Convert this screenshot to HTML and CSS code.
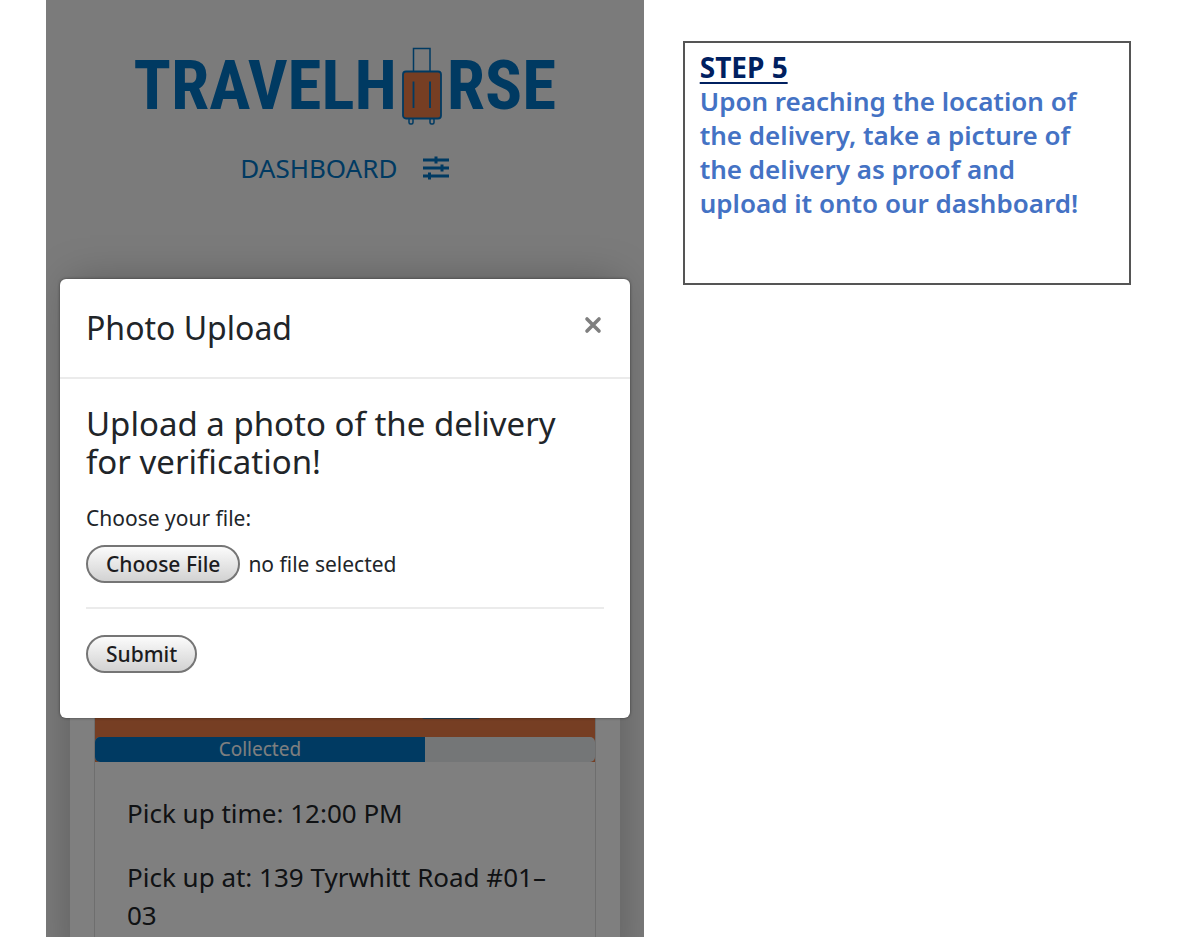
FILE: index.html
```html
<!DOCTYPE html>
<html lang="en">
<head>
<meta charset="utf-8">
<meta name="viewport" content="width=device-width, initial-scale=1">
<title>Travelhorse – Photo Upload</title>
<link rel="stylesheet" href="styles.css">
</head>
<body>
<main class="page">
  <section class="phone">
    <header class="brand">
      <h1 class="logo">
        <span>TRAVELH</span>
        <svg class="suitcase" viewBox="0 0 40 78" width="40" height="78" role="img" aria-label="O">
          <path d="M11.500 25V1.500H28V25" fill="none" stroke="#0074c4" stroke-width="1.500"/>
          <rect x="7" y="71" width="4" height="6" rx="1.500" fill="none" stroke="#0074c4" stroke-width="1.500"/>
          <rect x="28" y="71" width="4" height="6" rx="1.500" fill="none" stroke="#0074c4" stroke-width="1.500"/>
          <rect x="1" y="24.500" width="38" height="47" rx="3" fill="#ec7c46" stroke="#0074c4" stroke-width="1.800"/>
          <path d="M11.500 34.500V61M28 34.500V61" stroke="#0074c4" stroke-width="1.800"/>
        </svg>
        <span>RSE</span>
      </h1>
      <nav class="menu">
        <a class="menu-link" href="#">DASHBOARD</a>
        <button class="menu-button" type="button" aria-label="Settings">
          <svg viewBox="0 0 26 24" width="26" height="24" fill="#0074c4">
            <path d="M0 2.500h26v3H0zM0 10.500h26v3H0zM0 18.500h26v3H0zM11.500 0.500h3v7h-3zM17.500 8.500h3v7h-3zM5 16.500h3v7H5z"/>
          </svg>
        </button>
      </nav>
    </header>

    <article class="card">
      <div class="order">
        <div class="order-top">
          <div class="order-head"><span class="badge"></span></div>
          <div class="progress"><div class="progress-bar" style="width: 66%">Collected</div></div>
        </div>
        <div class="order-body">
          <p>Pick up time: 12:00 PM</p>
          <p>Pick up at: 139 Tyrwhitt Road #01–<br>03</p>
        </div>
      </div>
    </article>

    <div class="backdrop">
      <div class="modal" role="dialog" aria-labelledby="modal-title">
        <div class="modal-head">
          <h2 class="modal-title" id="modal-title">Photo Upload</h2>
          <button class="close" type="button" aria-label="Close">
            <svg viewBox="0 0 18 18" width="18" height="18"><path d="M3 3l12 12M15 3L3 15" stroke="#7f7f7f" stroke-width="3.600" stroke-linecap="round"/></svg>
          </button>
        </div>
        <form class="modal-body">
          <h3 class="prompt">Upload a photo of the delivery<br>for verification!</h3>
          <label class="field-label" for="photo">Choose your file:</label>
          <div class="file">
            <input class="file-input" type="file" id="photo">
            <label class="button" for="photo">Choose File</label>
            <span>no file selected</span>
          </div>
          <hr class="rule">
          <button class="button" type="submit">Submit</button>
        </form>
      </div>
    </div>
  </section>

  <aside class="note">
    <h2 class="note-title">STEP 5</h2>
    <p class="note-text">Upon reaching the location of<br>the delivery, take a picture of<br>the delivery as proof and<br>upload it onto our dashboard!</p>
  </aside>
</main>
</body>
</html>
```
FILE: styles.css
```css
* { box-sizing: border-box; }

body {
  margin: 0;
  background: #fff;
  color: #212529;
  font-family: "Noto Sans", "Open Sans", sans-serif;
}

h1, h2, h3, p { margin: 0; font-weight: 400; }

.page {
  display: grid;
  grid-template-columns: 4fr 3fr;
  gap: 39px;
  align-items: start;
  min-height: 100vh;
  padding: 0 53px 0 46px;
}

.phone {
  position: relative;
  align-self: stretch;
  display: flex;
  flex-direction: column;
  overflow: hidden;
  background: #f6f6f6;
}

.brand {
  display: flex;
  flex-direction: column;
  align-items: center;
  gap: 23px;
  padding-top: 47px;
}

.logo {
  display: flex;
  align-items: center;
  gap: 5px;
  color: #0074c4;
  font-family: "Roboto Condensed", "Liberation Sans Narrow", sans-serif;
  font-size: 69px;
  font-weight: 700;
  line-height: 78px;
}

.suitcase { display: block; }

.menu { display: flex; align-items: center; gap: 26px; }

.menu-link {
  color: #0074c4;
  font-size: 26px;
  line-height: 40px;
  text-decoration: none;
}

.menu-button, .close {
  display: flex;
  padding: 0;
  border: 0;
  background: none;
}

.card {
  flex: 1;
  margin: 93px 24px 0;
  padding: 24px 24px 0;
  background: #fff;
  box-shadow: 0 0 40px rgba(0, 0, 0, 0.25);
}

.order {
  height: 100%;
  border: 1px solid #dcdcdc;
  border-width: 0 1px;
}

.order-top { background: #ec7c46; }

.order-head {
  display: flex;
  align-items: flex-end;
  justify-content: flex-end;
  height: 432px;
  padding: 0 114px 18px;
}

.badge {
  width: 60px;
  height: 32px;
  border-radius: 4px;
  background: #4f83ad;
}

.progress {
  overflow: hidden;
  border-radius: 5px;
  background: #e9ecef;
}

.progress-bar {
  background: #0074c4;
  color: #fff;
  font-size: 19px;
  line-height: 25px;
  text-align: center;
}

.order-body {
  display: grid;
  gap: 26px;
  padding: 32px;
  font-size: 26px;
  line-height: 38px;
}

.backdrop {
  position: absolute;
  inset: 0;
  padding: 279px 14px 0;
  background: rgba(0, 0, 0, 0.5);
}

.modal {
  border-radius: 6px;
  background: #fff;
  box-shadow: 0 0 3px rgba(0, 0, 0, 0.5);
}

.modal-head {
  display: flex;
  justify-content: space-between;
  align-items: flex-start;
  padding: 26px 28px 26px 26px;
  border-bottom: 2px solid #ebebeb;
}

.modal-title { font-size: 32px; line-height: 46px; }

.close { padding-top: 11px; }

.modal-body { padding: 26px 26px 45px; }

.prompt {
  margin-bottom: 22px;
  font-size: 33px;
  line-height: 38px;
}

.field-label {
  display: block;
  margin-bottom: 12px;
  font-size: 21px;
  line-height: 30px;
}

.file {
  display: flex;
  align-items: center;
  gap: 8px;
  font-size: 21px;
  line-height: 32px;
}

.file-input {
  position: absolute;
  width: 1px;
  height: 1px;
  opacity: 0;
}

.button {
  padding: 0 18px;
  border: 2px solid #757575;
  border-radius: 19px;
  background: linear-gradient(#fbfbfb, #d2d2d2);
  color: #1c1c1e;
  font-family: inherit;
  font-size: 21px;
  font-weight: 500;
  line-height: 34px;
}

.rule {
  margin: 24px 0 26px;
  border: 0;
  border-top: 2px solid #ebebeb;
}

.note {
  min-height: 244px;
  margin-top: 41px;
  padding: 7px 15px;
  border: 2px solid #555;
  color: #4472c4;
  font-size: 26px;
  line-height: 34px;
}

.note-title {
  color: #002060;
  font-size: 28px;
  font-weight: 700;
  text-decoration: underline;
  text-decoration-thickness: 2px;
  text-underline-offset: 4px;
}

.note-text { font-weight: 600; }
```
